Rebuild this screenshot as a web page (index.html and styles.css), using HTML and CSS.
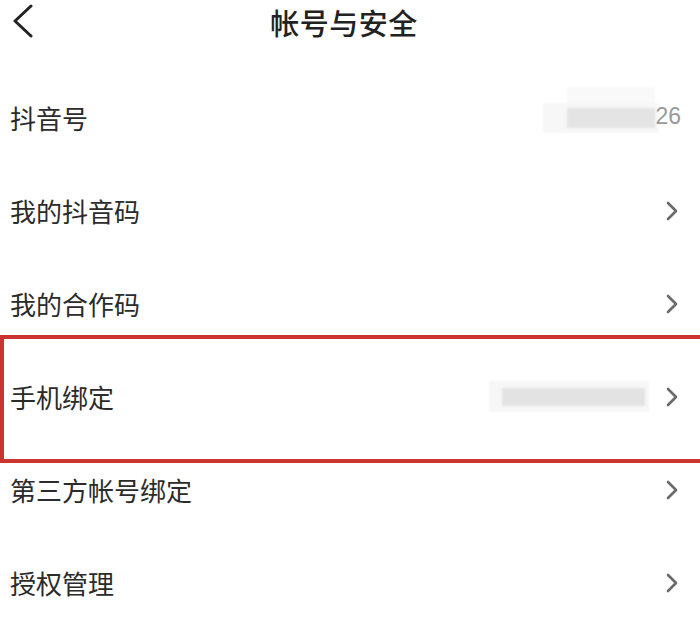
FILE: index.html
```html
<!DOCTYPE html>
<html lang="zh-CN">
<head>
<meta charset="utf-8">
<title>帐号与安全</title>
<link rel="stylesheet" href="styles.css">
</head>
<body>
<div class="page">
  <header class="topbar">
    <div class="back">
      <svg width="22" height="34" viewBox="0 0 22 34"><path d="M20 2 L4 17 L20 32" fill="none" stroke="#222" stroke-width="3" stroke-linecap="round" stroke-linejoin="round"/></svg>
    </div>
    <h1 class="title">帐号与安全</h1>
    <div class="spacer"></div>
  </header>
  <ul class="list">
    <li class="row">
      <span class="label">抖音号</span>
      <span class="value">
        <span class="mask mask-id"><span class="mask-top"></span><span class="mask-inner"></span></span>
        <span class="num">26</span>
      </span>
    </li>
    <li class="row">
      <span class="label">我的抖音码</span>
      <svg class="arrow" width="14" height="20" viewBox="0 0 14 20"><path d="M3 2 L11 10 L3 18" fill="none" stroke="#6a6a6a" stroke-width="2.6" stroke-linecap="round" stroke-linejoin="round"/></svg>
    </li>
    <li class="row">
      <span class="label">我的合作码</span>
      <svg class="arrow" width="14" height="20" viewBox="0 0 14 20"><path d="M3 2 L11 10 L3 18" fill="none" stroke="#6a6a6a" stroke-width="2.6" stroke-linecap="round" stroke-linejoin="round"/></svg>
    </li>
    <li class="row highlighted">
      <span class="label">手机绑定</span>
      <span class="value">
        <span class="mask mask-phone"><span class="mask-inner"></span></span>
        <svg class="arrow" width="14" height="20" viewBox="0 0 14 20"><path d="M3 2 L11 10 L3 18" fill="none" stroke="#6a6a6a" stroke-width="2.6" stroke-linecap="round" stroke-linejoin="round"/></svg>
      </span>
      <span class="redbox"></span>
    </li>
    <li class="row">
      <span class="label">第三方帐号绑定</span>
      <svg class="arrow" width="14" height="20" viewBox="0 0 14 20"><path d="M3 2 L11 10 L3 18" fill="none" stroke="#6a6a6a" stroke-width="2.6" stroke-linecap="round" stroke-linejoin="round"/></svg>
    </li>
    <li class="row">
      <span class="label">授权管理</span>
      <svg class="arrow" width="14" height="20" viewBox="0 0 14 20"><path d="M3 2 L11 10 L3 18" fill="none" stroke="#6a6a6a" stroke-width="2.6" stroke-linecap="round" stroke-linejoin="round"/></svg>
    </li>
  </ul>
</div>
</body>
</html>
```

FILE: styles.css
```css
html, body {
  margin: 0;
  padding: 0;
  background: #ffffff;
}
body {
  font-family: "Noto Sans CJK SC", "Noto Sans", sans-serif;
  color: #2a2a2a;
  overflow: hidden;
}
.page {
  width: 700px;
  height: 639px;
  overflow: hidden;
}
.topbar {
  height: 44px;
  display: flex;
  align-items: center;
}
.back {
  width: 32px;
  display: flex;
  align-items: center;
}
.back svg {
  margin-left: 11px;
  margin-top: -2px;
  flex: none;
}
.title {
  flex: 1;
  margin: 0;
  text-align: center;
  font-size: 29px;
  font-weight: 500;
  color: #222;
  line-height: 44px;
  letter-spacing: 0.5px;
}
.spacer {
  width: 44px;
}
.list {
  list-style: none;
  margin: 27px 0 0;
  padding: 0;
}
.row {
  position: relative;
  height: 93px;
  display: flex;
  align-items: center;
  justify-content: space-between;
  padding: 0 22px 0 10px;
}
.label {
  font-size: 26px;
  line-height: 30px;
  color: #2b2b2b;
}
.value {
  display: flex;
  align-items: center;
}
.arrow {
  flex: none;
  margin-right: -1px;
}
.num {
  position: relative;
  z-index: 1;
  font-family: "Liberation Sans", Arial, sans-serif;
  font-size: 23px;
  color: #9a9a9a;
  margin-right: -3px;
  margin-top: -2px;
}
.mask {
  position: relative;
  display: flex;
  align-items: center;
  background: #f7f7f7;
  filter: blur(1.2px);
}
.mask-id {
  width: 116px;
  height: 30px;
  margin-right: -4px;
  padding-left: 24px;
  box-sizing: border-box;
}
.mask-top {
  position: absolute;
  left: 24px;
  top: -16px;
  width: 88px;
  height: 16px;
  background: #f9f9f9;
}
.mask-id .mask-inner {
  width: 88px;
  height: 20px;
  background: #e4e4e4;
}
.mask-phone {
  width: 160px;
  height: 31px;
  margin-right: 16px;
  padding-left: 13px;
  box-sizing: border-box;
}
.mask-phone .mask-inner {
  width: 143px;
  height: 18px;
  background: #e3e3e3;
}
.redbox {
  position: absolute;
  left: 0;
  right: -10px;
  top: -15px;
  bottom: -20px;
  border: 4px solid #cc3431;
  pointer-events: none;
}
```
